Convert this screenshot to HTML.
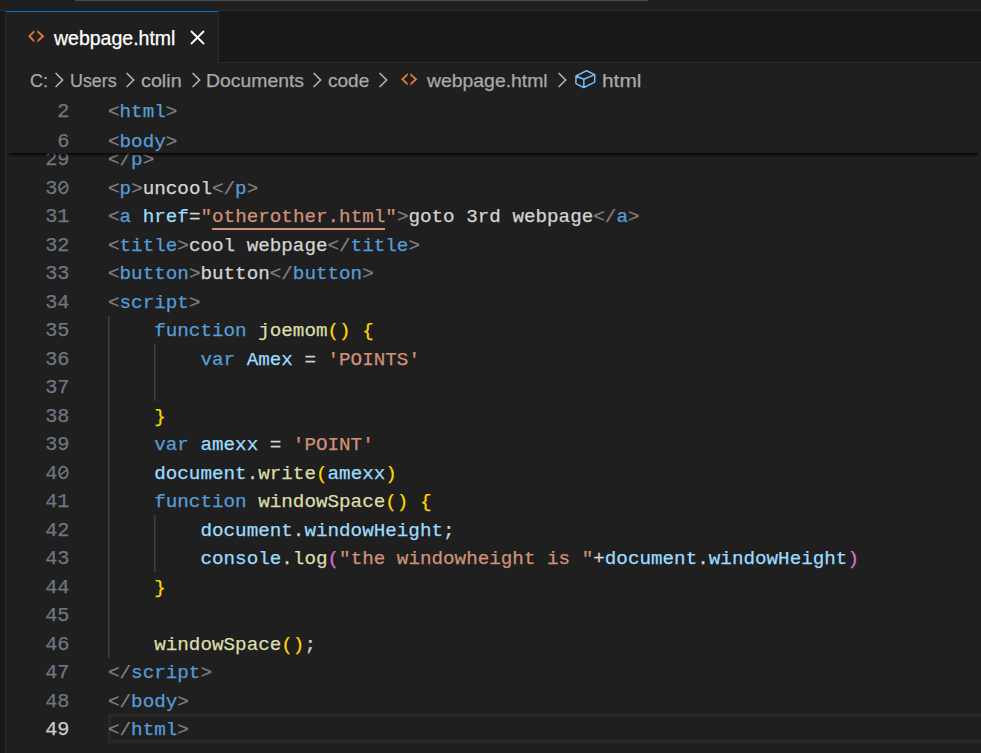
<!DOCTYPE html>
<html><head><meta charset="utf-8">
<style>
*{margin:0;padding:0;box-sizing:border-box}
html,body{width:981px;height:753px;overflow:hidden;background:#1f1f1f}
body{position:relative;font-family:"Liberation Sans",sans-serif}
.abs{position:absolute}
#topbar{left:0;top:0;width:981px;height:10px;background:#1f1f1f}
#slider{left:75px;top:0;width:573px;height:1px;background:#4a4a4a}
#hb{left:0;top:10px;width:981px;height:1px;background:#2b2b2b}
#side{left:0;top:11px;width:5px;height:742px;background:#181818}
#vb{left:5px;top:11px;width:1px;height:742px;background:#2b2b2b}
#tabs{left:6px;top:11px;width:975px;height:51px;background:#181818}
#tabsb{left:6px;top:62px;width:975px;height:1px;background:#2b2b2b}
#tab{left:6px;top:10px;width:212px;height:53px;background:#1f1f1f}
#tabtop{left:6px;top:11px;width:212px;height:1px;background:#0078d4}
#tabr{left:218px;top:10px;width:1px;height:53px;background:#2b2b2b}
.ui{position:absolute;font-family:"Liberation Sans",sans-serif;font-size:19.5px;line-height:22px;white-space:pre;-webkit-text-stroke:0.25px currentColor}
.bc{color:#a9a9a9;top:70px;font-size:19px;transform-origin:0 0}
.chev{position:absolute;top:72px}
.code{position:absolute;left:108px;font-family:"Liberation Mono",monospace;font-size:19.25px;line-height:28.5px;height:28.5px;white-space:pre;color:#cccccc;-webkit-text-stroke:0.25px currentColor}
.ln{position:absolute;left:6px;width:63.5px;text-align:right;font-family:"Liberation Mono",monospace;font-size:20.25px;line-height:28.5px;height:28.5px;white-space:pre;color:#6e7681;-webkit-text-stroke:0.25px currentColor}
.t{color:#808080}.n{color:#569cd6}.a{color:#9cdcfe}.s{color:#ce9178}.f{color:#dcdcaa}.k{color:#569cd6}.v{color:#9cdcfe}.p{color:#d4d4d4}.y{color:#ffd700}.m{color:#da70d6}.w{color:#d4d4d4}
.su{color:#ce9178}
#ul{left:212px;top:228px;width:173px;height:2px;background:#ce9178}
.ln.cur{color:#cccccc}
.z{color:transparent;-webkit-text-stroke:0}
.zsvg{position:absolute;left:0;top:0}
.guide{position:absolute;width:1px;background:#404040;box-shadow:1px 0 0 #303030}
#sticky{left:6px;top:96px;width:975px;height:57px;background:#1f1f1f;overflow:hidden}
#stclip{left:6px;top:96px;width:972px;height:70px;overflow:hidden}
#stsh{left:0;top:0;width:990px;height:57px;box-shadow:0 4.5px 3px -3px rgba(0,0,0,0.95)}
#cur{left:108px;top:714px;width:880px;height:29px;border:3px solid #282828;border-right:none}
</style></head><body>
<div id="topbar" class="abs"></div>
<div id="slider" class="abs"></div>
<div id="hb" class="abs"></div>
<div id="side" class="abs"></div>
<div id="vb" class="abs"></div>
<div id="tabs" class="abs"></div>
<div id="tabsb" class="abs"></div>
<div id="tab" class="abs"></div>
<div id="tabtop" class="abs"></div>
<div id="tabr" class="abs"></div>

<svg class="abs" style="left:27.5px;top:30.3px" width="17" height="13" viewBox="0 0 17 13"><path d="M6.3 0 L0 6.3 L6.3 12.6 L6.3 10 L2.7 6.3 L6.3 2.6 Z M9.4 0 L16.4 6.3 L9.4 12.6 L9.4 10 L13.6 6.3 L9.4 2.6 Z" fill="#e37933"/></svg>
<div class="ui" style="left:54px;top:27px;color:#ffffff">webpage.html</div>
<svg class="abs" style="left:190px;top:30px" width="15" height="15" viewBox="0 0 15 15"><path d="M1 1 L14 14 M14 1 L1 14" fill="none" stroke="#ffffff" stroke-width="1.8"/></svg>

<div class="ui bc" style="left:30px;transform:scaleX(0.94)">C:</div>
<div class="ui bc" style="left:70px;transform:scaleX(0.94)">Users</div>
<div class="ui bc" style="left:141px;transform:scaleX(1.04)">colin</div>
<div class="ui bc" style="left:206px;transform:scaleX(1.02)">Documents</div>
<div class="ui bc" style="left:328px;transform:scaleX(1.0)">code</div>
<div class="ui bc" style="left:427px;transform:scaleX(1.02)">webpage.html</div>
<div class="ui bc" style="left:602px;transform:scaleX(1.1)">html</div>
<svg class="chev" style="left:54px" width="11" height="16" viewBox="0 0 11 16"><path d="M1.6 1 L8.6 8 L1.6 15" fill="none" stroke="#b4b4b4" stroke-width="1.6"/></svg><svg class="chev" style="left:125px" width="11" height="16" viewBox="0 0 11 16"><path d="M1.6 1 L8.6 8 L1.6 15" fill="none" stroke="#b4b4b4" stroke-width="1.6"/></svg><svg class="chev" style="left:190.5px" width="11" height="16" viewBox="0 0 11 16"><path d="M1.6 1 L8.6 8 L1.6 15" fill="none" stroke="#b4b4b4" stroke-width="1.6"/></svg><svg class="chev" style="left:312px" width="11" height="16" viewBox="0 0 11 16"><path d="M1.6 1 L8.6 8 L1.6 15" fill="none" stroke="#b4b4b4" stroke-width="1.6"/></svg><svg class="chev" style="left:378px" width="11" height="16" viewBox="0 0 11 16"><path d="M1.6 1 L8.6 8 L1.6 15" fill="none" stroke="#b4b4b4" stroke-width="1.6"/></svg><svg class="chev" style="left:557px" width="11" height="16" viewBox="0 0 11 16"><path d="M1.6 1 L8.6 8 L1.6 15" fill="none" stroke="#b4b4b4" stroke-width="1.6"/></svg>
<svg class="abs" style="left:401.3px;top:73px" width="17" height="13" viewBox="0 0 17 13"><path d="M6.6 0 L0 6.3 L6.6 12.6 L6.6 10 L2.8 6.3 L6.6 2.6 Z M9.4 0 L16.4 6.3 L9.4 12.6 L9.4 10 L13.6 6.3 L9.4 2.6 Z" fill="#e37933"/></svg>
<svg class="abs" style="left:574px;top:68px" width="23" height="22" viewBox="0 0 23 22"><path d="M12.6 2.7 L2 8 L9.8 11.3 L20.7 6.6 Z M2 8 L1.9 15.6 L9.8 19.6 L20.7 14.1 L20.7 6.6 M9.8 11.3 L9.8 19.6" fill="none" stroke="#75beff" stroke-width="1.5" stroke-linejoin="round"/></svg>
<div id="cur" class="abs"></div>
<div class="ln" style="top:146.10px">29</div>
<div class="code" style="top:146.10px"><span class="t">&lt;/</span><span class="n">p</span><span class="t">&gt;</span></div>
<div class="ln" style="top:174.60px">3<span class="z">0</span><svg class="zsvg" width="66" height="28"><ellipse cx="57.4" cy="12.5" rx="4.3" ry="5.8" fill="none" stroke="#6e7681" stroke-width="1.8"/><line x1="54.0" y1="14.9" x2="60.8" y2="10.1" stroke="#6e7681" stroke-width="1.4"/></svg></div>
<div class="code" style="top:174.60px"><span class="t">&lt;</span><span class="n">p</span><span class="t">&gt;</span><span class="w">uncool</span><span class="t">&lt;/</span><span class="n">p</span><span class="t">&gt;</span></div>
<div class="ln" style="top:203.10px">31</div>
<div class="code" style="top:203.10px"><span class="t">&lt;</span><span class="n">a</span><span class="w"> </span><span class="a">href</span><span class="w">=</span><span class="s">"</span><span class="su">otherother.html</span><span class="s">"</span><span class="t">&gt;</span><span class="w">goto 3rd webpage</span><span class="t">&lt;/</span><span class="n">a</span><span class="t">&gt;</span></div>
<div class="ln" style="top:231.60px">32</div>
<div class="code" style="top:231.60px"><span class="t">&lt;</span><span class="n">title</span><span class="t">&gt;</span><span class="w">cool webpage</span><span class="t">&lt;/</span><span class="n">title</span><span class="t">&gt;</span></div>
<div class="ln" style="top:260.10px">33</div>
<div class="code" style="top:260.10px"><span class="t">&lt;</span><span class="n">button</span><span class="t">&gt;</span><span class="w">button</span><span class="t">&lt;/</span><span class="n">button</span><span class="t">&gt;</span></div>
<div class="ln" style="top:288.60px">34</div>
<div class="code" style="top:288.60px"><span class="t">&lt;</span><span class="n">script</span><span class="t">&gt;</span></div>
<div class="ln" style="top:317.10px">35</div>
<div class="code" style="top:317.10px"><span class="w">    </span><span class="k">function</span><span class="w"> </span><span class="f">joemom</span><span class="y">()</span><span class="w"> </span><span class="y">{</span></div>
<div class="ln" style="top:345.60px">36</div>
<div class="code" style="top:345.60px"><span class="w">        </span><span class="k">var</span><span class="w"> </span><span class="v">Amex</span><span class="w"> = </span><span class="s">'POINTS'</span></div>
<div class="ln" style="top:374.10px">37</div>
<div class="code" style="top:374.10px"></div>
<div class="ln" style="top:402.60px">38</div>
<div class="code" style="top:402.60px"><span class="w">    </span><span class="y">}</span></div>
<div class="ln" style="top:431.10px">39</div>
<div class="code" style="top:431.10px"><span class="w">    </span><span class="k">var</span><span class="w"> </span><span class="v">amexx</span><span class="w"> = </span><span class="s">'POINT'</span></div>
<div class="ln" style="top:459.60px">4<span class="z">0</span><svg class="zsvg" width="66" height="28"><ellipse cx="57.4" cy="12.5" rx="4.3" ry="5.8" fill="none" stroke="#6e7681" stroke-width="1.8"/><line x1="54.0" y1="14.9" x2="60.8" y2="10.1" stroke="#6e7681" stroke-width="1.4"/></svg></div>
<div class="code" style="top:459.60px"><span class="w">    </span><span class="v">document</span><span class="w">.</span><span class="f">write</span><span class="y">(</span><span class="v">amexx</span><span class="y">)</span></div>
<div class="ln" style="top:488.10px">41</div>
<div class="code" style="top:488.10px"><span class="w">    </span><span class="k">function</span><span class="w"> </span><span class="f">windowSpace</span><span class="y">()</span><span class="w"> </span><span class="y">{</span></div>
<div class="ln" style="top:516.60px">42</div>
<div class="code" style="top:516.60px"><span class="w">        </span><span class="v">document</span><span class="w">.</span><span class="v">windowHeight</span><span class="w">;</span></div>
<div class="ln" style="top:545.10px">43</div>
<div class="code" style="top:545.10px"><span class="w">        </span><span class="v">console</span><span class="w">.</span><span class="f">log</span><span class="m">(</span><span class="s">"the windowheight is "</span><span class="w">+</span><span class="v">document</span><span class="w">.</span><span class="v">windowHeight</span><span class="m">)</span></div>
<div class="ln" style="top:573.60px">44</div>
<div class="code" style="top:573.60px"><span class="w">    </span><span class="y">}</span></div>
<div class="ln" style="top:602.10px">45</div>
<div class="code" style="top:602.10px"></div>
<div class="ln" style="top:630.60px">46</div>
<div class="code" style="top:630.60px"><span class="w">    </span><span class="f">windowSpace</span><span class="y">()</span><span class="w">;</span></div>
<div class="ln" style="top:659.10px">47</div>
<div class="code" style="top:659.10px"><span class="t">&lt;/</span><span class="n">script</span><span class="t">&gt;</span></div>
<div class="ln" style="top:687.60px">48</div>
<div class="code" style="top:687.60px"><span class="t">&lt;/</span><span class="n">body</span><span class="t">&gt;</span></div>
<div class="ln cur" style="top:716.10px">49</div>
<div class="code" style="top:716.10px"><span class="t">&lt;/</span><span class="n">html</span><span class="t">&gt;</span></div>
<div class="guide" style="left:108px;top:315.5px;height:342.0px"></div>
<div class="guide" style="left:154px;top:344.0px;height:57.0px"></div>
<div class="guide" style="left:154px;top:515.0px;height:57.0px"></div>
<div id="ul" class="abs"></div>
<div id="stclip" class="abs"><div id="stsh" class="abs"></div></div><div id="sticky" class="abs">
<div class="ln" style="left:0;top:1.60px">2</div><div class="code" style="left:102px;top:1.60px"><span class="t">&lt;</span><span class="n">html</span><span class="t">&gt;</span></div>
<div class="ln" style="left:0;top:31.60px">6</div><div class="code" style="left:102px;top:31.60px"><span class="t">&lt;</span><span class="n">body</span><span class="t">&gt;</span></div>
</div>

</body></html>
